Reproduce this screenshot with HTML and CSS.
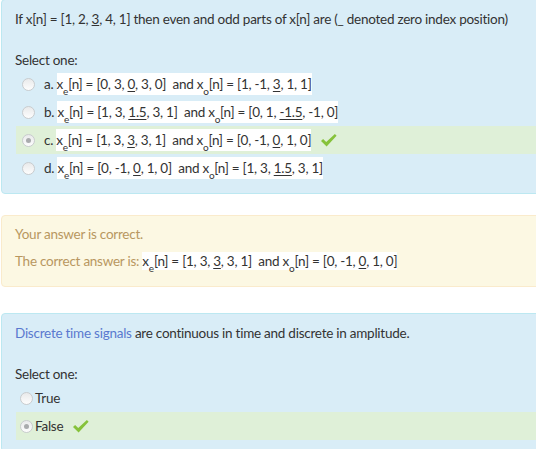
FILE: index.html
```html
<!DOCTYPE html>
<html lang="en">
<head>
<meta charset="utf-8">
<title>Quiz review</title>
<link rel="stylesheet" href="styles.css">
</head>
<body>
<div class="que q-multi">
  <div class="qtext">If x[n] = [1, 2, <u>3</u>, 4, 1] then even and odd parts of x[n] are (_ denoted zero index position)</div>
  <div class="prompt">Select one:</div>
  <div class="answer">
    <div class="opt"><span class="radio"></span><span class="lbl">a. </span><span class="math">x<sub>e</sub>[n] = [0, 3, <u>0</u>, 3, 0]&nbsp; and x<sub>o</sub>[n] = [1, -1, <u>3</u>, 1, 1]</span></div>
    <div class="opt"><span class="radio"></span><span class="lbl">b. </span><span class="math">x<sub>e</sub>[n] = [1, 3, <u>1.5</u>, 3, 1]&nbsp; and x<sub>o</sub>[n] = [0, 1, <u>-1.5</u>, -1, 0]</span></div>
    <div class="opt correct"><span class="radio checked"></span><span class="lbl">c. </span><span class="math">x<sub>e</sub>[n] = [1, 3, <u>3</u>, 3, 1]&nbsp; and x<sub>o</sub>[n] = [0, -1, <u>0</u>, 1, 0]</span><svg class="tick" width="16" height="13" viewBox="0 0 16 13"><path d="M0 6.9 L2.1 5.1 L5.2 8.1 L13.9 0 L15.6 1.7 L5.6 12.6 Z" fill="#86c23a"/></svg></div>
    <div class="opt"><span class="radio"></span><span class="lbl">d. </span><span class="math">x<sub>e</sub>[n] = [0, -1, <u>0</u>, 1, 0]&nbsp; and x<sub>o</sub>[n] = [1, 3, <u>1.5</u>, 3, 1]</span></div>
  </div>
</div>

<div class="outcome">
  <p>Your answer is correct.</p>
  <p>The correct answer is: <span class="math">x<sub>e</sub>[n] = [1, 3, <u>3</u>, 3, 1]&nbsp; and x<sub>o</sub>[n] = [0, -1, <u>0</u>, 1, 0]</span></p>
</div>

<div class="que q-tf">
  <div class="qtext"><a href="#" class="glossary">Discrete time signals</a> are continuous in time and discrete in amplitude.</div>
  <div class="prompt">Select one:</div>
  <div class="answer">
    <div class="opt"><span class="radio"></span><span class="lbl">True</span></div>
    <div class="opt correct"><span class="radio checked"></span><span class="lbl">False</span><svg class="tick" width="16" height="13" viewBox="0 0 16 13"><path d="M0 6.9 L2.1 5.1 L5.2 8.1 L13.9 0 L15.6 1.7 L5.6 12.6 Z" fill="#86c23a"/></svg></div>
  </div>
</div>
</body>
</html>
```

FILE: styles.css
```css
html, body {
  margin: 0;
  padding: 0;
  background: #fff;
  overflow: hidden;
}
body {
  font-family: Lato, "Open Sans", sans-serif;
  font-size: 13.5px;
  letter-spacing: -0.25px;
  color: #333;
  line-height: 20px;
}
.que {
  margin: 0 -30px 0 1px;
  border: 1px solid #bce8f1;
  border-radius: 4px;
  background: #d9edf7;
  padding: 9px 12px 11px 13px;
}
.q-multi {
  margin-top: -1px;
}
.qtext {
  line-height: 20px;
  white-space: nowrap;
}
.prompt {
  margin-top: 22px;
  line-height: 19px;
}
.answer {
  margin-left: 1px;
}
.opt {
  display: flex;
  align-items: center;
  height: 28px;
  white-space: nowrap;
}
.opt.correct {
  background: #dff0d8;
}
.radio {
  width: 11px;
  height: 11px;
  border-radius: 50%;
  border: 1px solid #c9ccce;
  background: linear-gradient(#e9eaeb, #fdfdfd);
  flex: none;
  position: relative;
  box-sizing: content-box;
}
.radio.checked::after {
  content: "";
  position: absolute;
  left: 3px;
  top: 3px;
  width: 5px;
  height: 5px;
  border-radius: 50%;
  background: #a9abad;
}
.q-multi .radio {
  margin-left: 6px;
  margin-right: 9px;
}
.q-tf .radio {
  margin-left: 4px;
  margin-right: 2px;
}
.lbl {
  white-space: pre;
}
.math {
  background: #fff;
  white-space: pre;
  padding: 1px 0;
}
.math sub {
  font-size: 10px;
  vertical-align: -6px;
  line-height: 0;
}
.math u {
  text-decoration-thickness: 1px;
  text-underline-offset: 2px;
}
.tick {
  margin-left: 10px;
  flex: none;
}
.outcome {
  margin: 21px -30px 0 1px;
  border: 1px solid #faebcc;
  border-radius: 4px;
  background: #fcf8e3;
  color: #b8975f;
  padding: 8px 12px 15px 13px;
}
.outcome p {
  margin: 0 0 7px 0;
  line-height: 20px;
  white-space: nowrap;
}
.outcome p:last-child {
  margin-bottom: 0;
}
.outcome .math {
  color: #333;
}
.q-tf {
  margin-top: 26px;
}
.glossary {
  color: #5a79cf;
  text-decoration: none;
}
```
